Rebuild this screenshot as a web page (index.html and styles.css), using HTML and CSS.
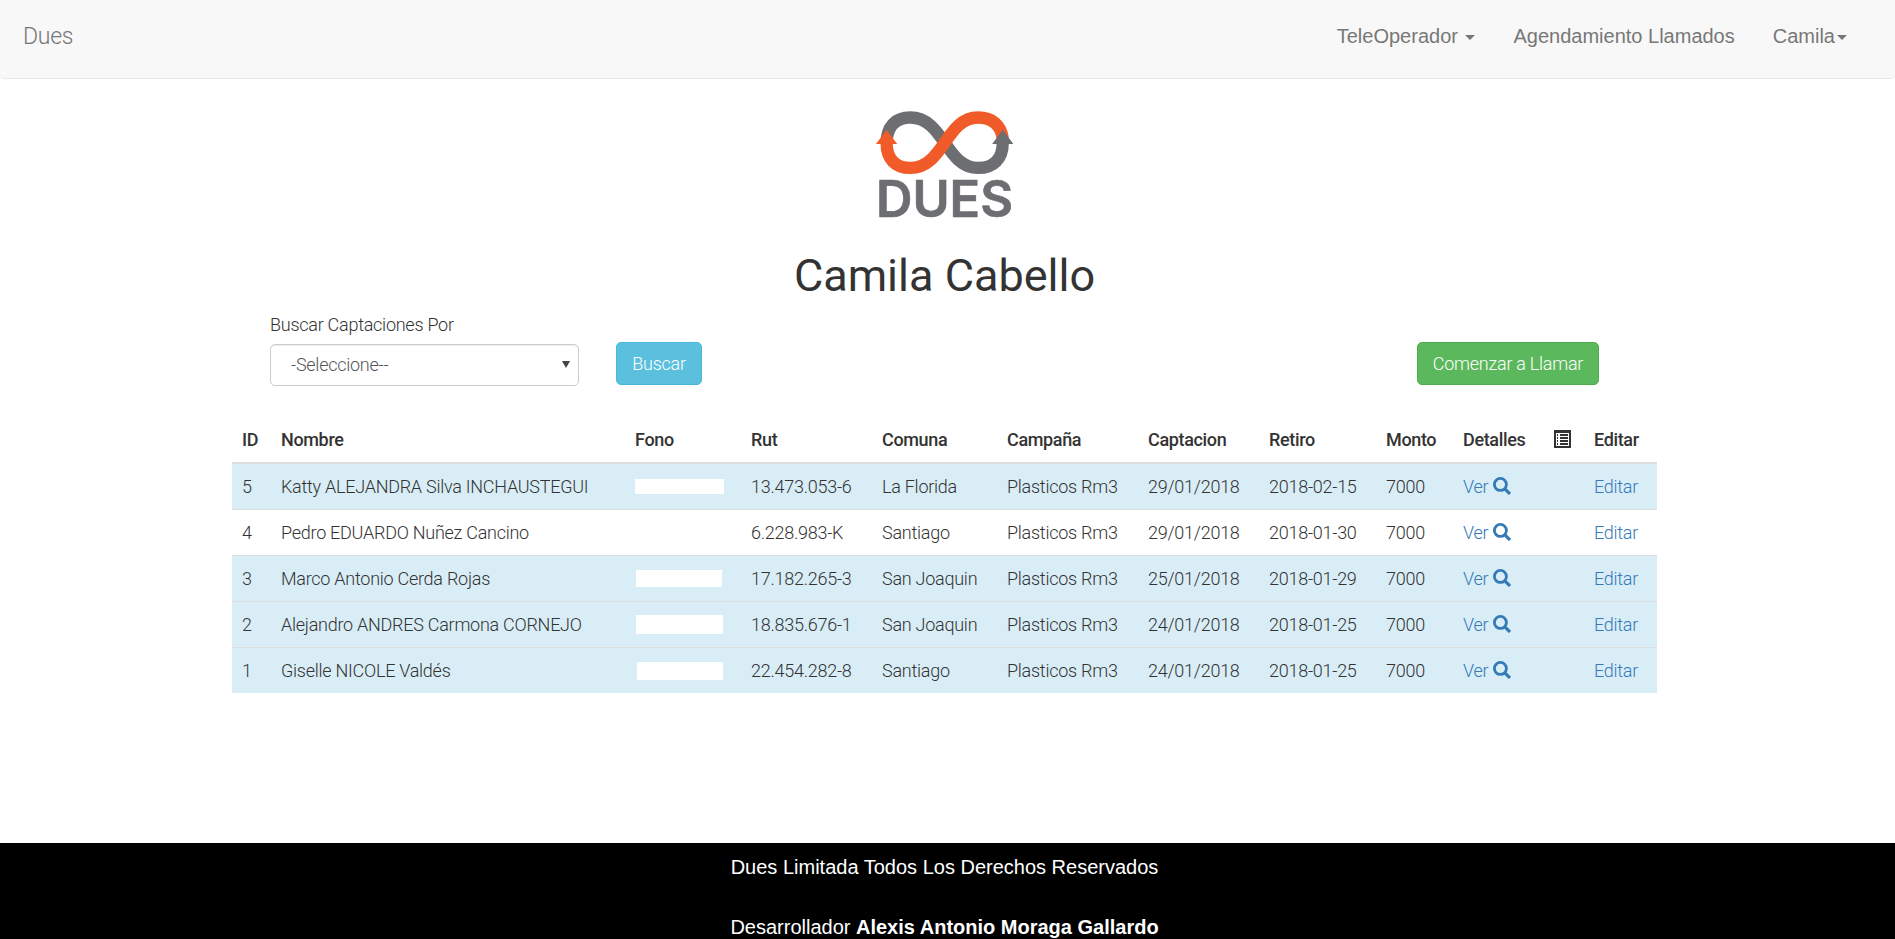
FILE: index.html
```html
<!DOCTYPE html>
<html lang="es">
<head>
<meta charset="utf-8">
<title>Dues</title>
<link rel="stylesheet" href="styles.css">
</head>
<body>
<svg class="sprite" aria-hidden="true">
  <symbol id="search" viewBox="0 0 18 18"><circle cx="7.4" cy="7.4" r="6" fill="none" stroke="currentColor" stroke-width="2.8"/><path d="M11.4 11.4l5.6 5.6" stroke="currentColor" stroke-width="3.2"/></symbol>
</svg>
<nav class="navbar">
  <a class="brand">Dues</a>
  <div class="menu">
    <a class="menu-item tele">TeleOperador <i class="caret"></i></a>
    <a class="menu-item agenda">Agendamiento Llamados</a>
    <a class="menu-item user">Camila<i class="caret"></i></a>
  </div>
</nav>
<main class="container">
  <svg class="logo" viewBox="0 0 512 405" role="img" aria-label="Dues">
    <g fill="none" stroke-width="37">
      <path d="M80 145C80 94 106 67 152 67C201 67 229 105 255 143S307 219 356 219C402 219 430 192 430 142" stroke="#6d6e71"/>
      <path d="M80 142C80 192 106 219 152 219C201 219 229 181 255 143S307 67 356 67C398 67 424 89 430 130" stroke="#f15a29"/>
    </g>
    <path d="M80 104L112 147H48z" fill="#f15a29"/>
    <path d="M430 104L462 147H398z" fill="#6d6e71"/>
    <text x="48" y="366" textLength="413" lengthAdjust="spacingAndGlyphs">DUES</text>
  </svg>
  <h1>Camila Cabello</h1>
  <form class="filters">
    <div class="field">
      <label>Buscar Captaciones Por</label>
      <div class="select"><span>-Seleccione--</span><i class="arrow"></i></div>
    </div>
    <button type="button" class="btn info">Buscar</button>
    <button type="button" class="btn success">Comenzar a Llamar</button>
  </form>
  <table>
    <colgroup><col class="c-id"><col class="c-name"><col class="c-phone"><col class="c-rut"><col class="c-city"><col class="c-campaign"><col class="c-date"><col class="c-pickup"><col class="c-amount"><col class="c-detail"><col class="c-list"><col class="c-edit"></colgroup>
    <thead><tr><th>ID</th><th>Nombre</th><th>Fono</th><th>Rut</th><th>Comuna</th><th>Campaña</th><th>Captacion</th><th>Retiro</th><th>Monto</th><th>Detalles</th><th><svg class="list" viewBox="0 0 17 18" shape-rendering="crispEdges"><path d="M0 0h17v18H0zM2 3v13h13V3z" fill="currentColor" fill-rule="evenodd"/><path d="M3 4h1v2H3zM3 7h1v2H3zM3 10h1v2H3zM3 13h1v2H3zM6 4h8v2H6zM6 7h8v2H6zM6 10h8v2H6zM6 13h8v2H6z" fill="currentColor"/></svg></th><th>Editar</th></tr></thead>
    <tbody>
      <tr class="hl"><td>5</td><td>Katty ALEJANDRA Silva INCHAUSTEGUI</td><td><i class="mask m5"></i></td><td>13.473.053-6</td><td>La Florida</td><td>Plasticos Rm3</td><td>29/01/2018</td><td>2018-02-15</td><td>7000</td><td><a>Ver <svg class="search"><use href="#search"/></svg></a></td><td></td><td><a>Editar</a></td></tr>
      <tr><td>4</td><td>Pedro EDUARDO Nuñez Cancino</td><td></td><td>6.228.983-K</td><td>Santiago</td><td>Plasticos Rm3</td><td>29/01/2018</td><td>2018-01-30</td><td>7000</td><td><a>Ver <svg class="search"><use href="#search"/></svg></a></td><td></td><td><a>Editar</a></td></tr>
      <tr class="hl"><td>3</td><td>Marco Antonio Cerda Rojas</td><td><i class="mask m3"></i></td><td>17.182.265-3</td><td>San Joaquin</td><td>Plasticos Rm3</td><td>25/01/2018</td><td>2018-01-29</td><td>7000</td><td><a>Ver <svg class="search"><use href="#search"/></svg></a></td><td></td><td><a>Editar</a></td></tr>
      <tr class="hl"><td>2</td><td>Alejandro ANDRES Carmona CORNEJO</td><td><i class="mask m2"></i></td><td>18.835.676-1</td><td>San Joaquin</td><td>Plasticos Rm3</td><td>24/01/2018</td><td>2018-01-25</td><td>7000</td><td><a>Ver <svg class="search"><use href="#search"/></svg></a></td><td></td><td><a>Editar</a></td></tr>
      <tr class="hl"><td>1</td><td>Giselle NICOLE Valdés</td><td><i class="mask m1"></i></td><td>22.454.282-8</td><td>Santiago</td><td>Plasticos Rm3</td><td>24/01/2018</td><td>2018-01-25</td><td>7000</td><td><a>Ver <svg class="search"><use href="#search"/></svg></a></td><td></td><td><a>Editar</a></td></tr>
    </tbody>
  </table>
</main>
<footer>
  <p>Dues Limitada Todos Los Derechos Reservados</p>
  <p>Desarrollador <b>Alexis Antonio Moraga Gallardo</b></p>
</footer>
</body>
</html>
```

FILE: styles.css
```css
* { box-sizing: border-box; }
body { margin: 0; height: 939px; overflow: hidden; display: flex; flex-direction: column; background: #fff; color: #333; font: 300 18px/29px Roboto, sans-serif; letter-spacing: -0.26px; }
.sprite { display: none; }
.navbar { flex: none; height: 79px; display: flex; justify-content: space-between; align-items: flex-start; padding: 21px 48px 0 23px; background: #f8f8f8; border-bottom: 1px solid #e7e7e7; border-radius: 0 0 4px 4px; color: #777; }
.brand { font-size: 23px; line-height: 32px; }
.menu { display: flex; font: 400 20px/30px "Liberation Sans", Arial, sans-serif; letter-spacing: 0; }
.menu-item { white-space: nowrap; }
.agenda { margin: 0 38px; }
.caret { display: inline-block; border: 5px solid transparent; border-top-color: currentColor; border-bottom: 0; vertical-align: middle; margin-left: 2px; }
.container { flex: none; width: 1425px; margin-left: 232px; height: 764px; display: flex; flex-direction: column; }
.logo { width: 170px; height: 135px; margin: 16px 0 0 628px; display: block; }
.logo text { font: 600 151px Inter, sans-serif; fill: #6d6e71; stroke: #6d6e71; stroke-width: 2; letter-spacing: 0; }
h1 { margin: 20px 0 0; font-size: 45px; line-height: 52px; font-weight: 400; text-align: center; letter-spacing: 0; }
.filters { display: flex; align-items: flex-end; margin: 8px 58px 0 38px; height: 76px; }
.field { width: 309px; }
label { display: block; line-height: 29px; margin-bottom: 5px; }
.select { height: 42px; display: flex; align-items: center; justify-content: space-between; padding: 0 8px 2px 20px; border: 1px solid #ccc; border-radius: 5px; box-shadow: inset 0 1px 1px rgba(0,0,0,.075); color: #555; }
.arrow { border: 4px solid transparent; border-top: 7px solid #444; border-bottom: 0; }
.btn { height: 43px; margin-bottom: 1px; padding: 0; border: 1px solid; border-radius: 5px; color: #fff; font: inherit; letter-spacing: inherit; }
.info { width: 86px; margin-left: 37px; background: #5bc0de; border-color: #46b8da; }
.success { width: 182px; margin-left: auto; background: #5cb85c; border-color: #4cae4c; }
table { margin-top: 32px; width: 1425px; table-layout: fixed; border-collapse: separate; border-spacing: 0; }
.c-id { width: 39px; } .c-name { width: 354px; } .c-phone { width: 116px; } .c-rut { width: 131px; }
.c-city { width: 125px; } .c-campaign { width: 141px; } .c-date { width: 121px; } .c-pickup { width: 117px; }
.c-amount { width: 77px; } .c-detail { width: 91px; } .c-list { width: 40px; } .c-edit { width: 73px; }
th, td { padding: 0 0 0 10px; text-align: left; white-space: nowrap; }
th { height: 46px; padding-bottom: 2px; font-weight: 500; letter-spacing: -0.35px; border-bottom: 2px solid #ddd; }
td { height: 46px; border-top: 1px solid #ddd; }
tbody tr:first-child td { border-top: 0; height: 45px; }
.hl td { background: #d9edf7; }
td a { color: #337ab7; }
.search { width: 18px; height: 18px; margin-left: 1px; vertical-align: -2px; }
.list { width: 17px; height: 18px; display: block; }
.mask { display: block; background: #fff; height: 17px; width: 87px; }
.m5 { width: 89px; height: 15px; }
.m3 { width: 86px; margin-left: 1px; }
.m2 { height: 19px; margin-left: 1px; }
.m1 { width: 86px; height: 18px; margin-left: 2px; }
footer { flex: none; height: 96px; padding-top: 10px; background: #000; color: #fff; text-align: center; font: 400 20px/29px "Liberation Sans", Arial, sans-serif; letter-spacing: 0; }
footer p { margin: 0 6px 31px 0; }
```
